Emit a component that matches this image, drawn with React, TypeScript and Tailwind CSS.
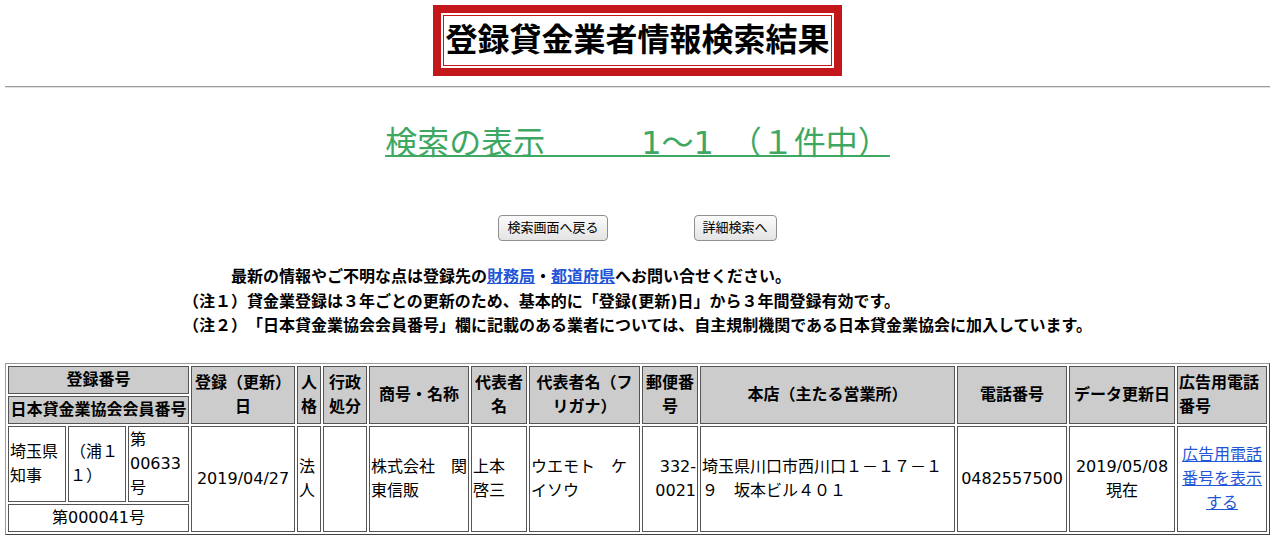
import React from "react";

const th = "border border-[#555] bg-[#cccccc] p-[1px] text-center align-middle font-bold";
const td = "border border-[#555] p-[1px] align-middle font-normal";

const widths = [58, 58, 61, 104, 24, 44, 100, 56, 111, 56, 255, 110, 106, 90];

const App = () => {
  return (
    <div className="min-h-[557px] bg-white px-[5px] pt-[5px] font-['DejaVu_Sans','Noto_Sans_CJK_JP',sans-serif] text-black [text-spacing-trim:space-all]">
      {/* タイトル */}
      <div className="mx-auto w-fit border-[8px] border-[#c4171c] p-[2px]">
        <h1 className="border border-[#c4171c] px-[1px] text-[32px] leading-[49px] font-bold">
          登録貸金業者情報検索結果
        </h1>
      </div>
      <div className="mt-[10px] h-[2px] border-t border-[#9b9b9b] bg-[#e2e2e2]" />

      <div className="mt-[35px] text-center">
        <a className="text-[32px] leading-[40px] text-[#3ea862] underline decoration-2 underline-offset-[1px] [text-spacing-trim:normal]">
          検索の表示　　　1〜1　（１件中）
        </a>
      </div>

      <div className="mt-[52px] flex justify-center gap-[86px]">
        <button
          type="button"
          className="h-[26px] rounded-[4px] border border-[#8f8f8f] bg-gradient-to-b from-[#fbfbfb] to-[#e4e4e4] px-[8px] text-[13px] leading-[24px]"
        >
          検索画面へ戻る
        </button>
        <button
          type="button"
          className="h-[26px] rounded-[4px] border border-[#8f8f8f] bg-gradient-to-b from-[#fbfbfb] to-[#e4e4e4] px-[8px] text-[13px] leading-[24px]"
        >
          詳細検索へ
        </button>
      </div>

      <div className="mt-[24px] text-center">
        <div className="inline-block text-left text-[16px] leading-[24.5px] font-bold">
          <div className="pl-[48px]">
            最新の情報やご不明な点は登録先の
            <a className="text-[#1f55d6] underline">財務局</a>・
            <a className="text-[#1f55d6] underline">都道府県</a>
            へお問い合せください。
          </div>
          <div>（注１）貸金業登録は３年ごとの更新のため、基本的に「登録(更新)日」から３年間登録有効です。</div>
          <div>
            （注２）「日本貸金業協会会員番号」欄に記載のある業者については、自主規制機関である日本貸金業協会に加入しています。
          </div>
        </div>
      </div>

      <table className="mt-[24px] w-full table-fixed border-separate border-spacing-[2px] border border-t-[#9a9a9a] border-l-[#9a9a9a] border-r-[#444] border-b-[#444] text-[16px] leading-[24px]">
        <colgroup>
          {widths.map((w, i) => (
            <col key={i} style={{ width: w }} />
          ))}
        </colgroup>
        <thead>
          <tr>
            <th colSpan={3} className={th}>登録番号</th>
            <th rowSpan={2} className={th}>登録（更新）日</th>
            <th rowSpan={2} className={th}>人格</th>
            <th rowSpan={2} className={th}>行政処分</th>
            <th rowSpan={2} className={th}>商号・名称</th>
            <th rowSpan={2} className={th}>代表者名</th>
            <th rowSpan={2} className={th}>代表者名（フリガナ）</th>
            <th rowSpan={2} className={th}>郵便番号</th>
            <th rowSpan={2} className={th}>本店（主たる営業所）</th>
            <th rowSpan={2} className={th}>電話番号</th>
            <th rowSpan={2} className={th}>データ更新日</th>
            <th rowSpan={2} className={`${th} !text-left`}>広告用電話番号</th>
          </tr>
          <tr>
            <th colSpan={3} className={th}>日本貸金業協会会員番号</th>
          </tr>
        </thead>
        <tbody>
          <tr>
            <td className={td}>埼玉県知事</td>
            <td className={td}>（浦１１）</td>
            <td className={td}>第00633号</td>
            <td rowSpan={2} className={`${td} text-center`}>2019/04/27</td>
            <td rowSpan={2} className={td}>法人</td>
            <td rowSpan={2} className={td}></td>
            <td rowSpan={2} className={td}>株式会社　関東信販</td>
            <td rowSpan={2} className={td}>上本　啓三</td>
            <td rowSpan={2} className={td}>ウエモト　ケイソウ</td>
            <td rowSpan={2} className={`${td} text-right`}>332-0021</td>
            <td rowSpan={2} className={td}>埼玉県川口市西川口１－１７－１９　坂本ビル４０１</td>
            <td rowSpan={2} className={`${td} text-center`}>0482557500</td>
            <td rowSpan={2} className={`${td} text-center`}>
              2019/05/08
              <br />
              現在
            </td>
            <td rowSpan={2} className={`${td} text-center`}>
              <a className="text-[#1f55d6] underline">広告用電話番号を表示する</a>
            </td>
          </tr>
          <tr>
            <td colSpan={3} className={`${td} text-center`}>第000041号</td>
          </tr>
        </tbody>
      </table>
    </div>
  );
};

export default App;
